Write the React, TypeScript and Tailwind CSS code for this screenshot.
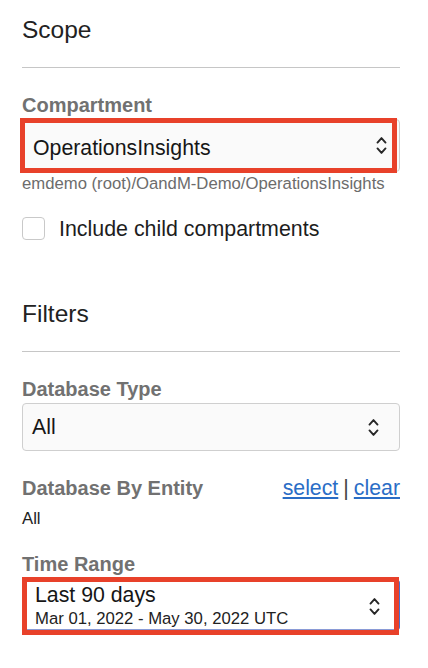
import React from "react";

const Chevrons = ({ className }: { className?: string }) => (
    <svg viewBox="0 0 10 18" className={className} fill="none" stroke="#262626" strokeWidth="1.8" strokeLinecap="round" strokeLinejoin="round">
        <path d="M1.2 6.2 L5 2 L8.8 6.2" />
        <path d="M1.2 11.8 L5 16 L8.8 11.8" />
    </svg>
);

const App = () => {
    return (
        <div className="w-[428px] h-[668px] bg-white pl-[22px] pr-[28px] pt-[16px] font-['Liberation_Sans',Arial,sans-serif] text-[#1d1d1d]">
            {/* Scope */}
            <div className="text-[24.5px] leading-[28px] text-[#222]">Scope</div>
            <div className="mt-[23px] h-px bg-[#c6c6c6]"></div>

            <div className="mt-[25px] text-[20px] leading-[24px] font-bold text-[#717171]">Compartment</div>
            <div className="relative mt-[2px]">
                <div className="h-[53px] flex items-center justify-between pl-[10px] pr-[11px] pt-[4px] bg-[#fafafa] border border-[#cfcfcf] rounded-[4px]">
                    <span className="text-[21.3px] leading-[24px] text-[#161616]">OperationsInsights</span>
                    <Chevrons className="w-[13px] h-[19px] -mt-[4px]" />
                </div>
                {/* annotation */}
                <div className="absolute -left-[2px] -top-[1px] right-[3px] -bottom-[1px] border-[5px] border-[#e8412a]"></div>
            </div>
            <div className="mt-[2px] text-[16.7px] leading-[20px] text-[#6c6c6c]">emdemo (root)/OandM-Demo/OperationsInsights</div>

            <label className="mt-[23px] h-[23px] flex items-center gap-[14px]">
                <span className="w-[23px] h-[23px] rounded-[4px] border border-[#c9c9c9] bg-white"></span>
                <span className="text-[21.4px] leading-[24px] text-[#1d1d1d]">Include child compartments</span>
            </label>

            {/* Filters */}
            <div className="mt-[60px] text-[24.5px] leading-[28px] text-[#222]">Filters</div>
            <div className="mt-[23px] h-px bg-[#c6c6c6]"></div>

            <div className="mt-[25px] text-[20px] leading-[24px] font-bold text-[#717171]">Database Type</div>
            <div className="mt-[2px] h-[48px] flex items-center justify-between pl-[9px] pr-[20px] bg-[#fafafa] border border-[#cfcfcf] rounded-[4px]">
                <span className="text-[21.3px] leading-[24px] text-[#161616]">All</span>
                <Chevrons className="w-[11px] h-[19px]" />
            </div>

            <div className="mt-[25px] flex items-baseline justify-between">
                <span className="text-[20px] leading-[24px] font-bold text-[#717171]">Database By Entity</span>
                <span className="text-[21.3px] leading-[24px] text-[#444]">
                    <a href="#" className="text-[#2a6dc6] underline">select</a>
                    <span className="mx-[5px]">|</span>
                    <a href="#" className="text-[#2a6dc6] underline">clear</a>
                </span>
            </div>
            <div className="mt-[9px] text-[16.7px] leading-[20px] text-[#1d1d1d]">All</div>

            <div className="mt-[23px] text-[20px] leading-[24px] font-bold text-[#717171]">Time Range</div>
            <div className="relative mt-[4px]">
                <div className="h-[50px] flex items-center justify-between pl-[12px] pr-[17px] bg-white border border-[#cfcfcf] border-r-[3px] border-r-[#4a6fd0] border-b-[#8a9bd6] rounded-[3px]">
                    <div className="flex flex-col self-start pt-[2px]">
                        <span className="text-[21.3px] leading-[24px] text-[#161616]">Last 90 days</span>
                        <span className="mt-[2px] text-[16.7px] leading-[20px] text-[#222]">Mar 01, 2022 - May 30, 2022 UTC</span>
                    </div>
                    <Chevrons className="w-[11px] h-[19px] mt-[2px]" />
                </div>
                {/* annotation */}
                <div className="absolute left-0 -top-[3px] right-[1px] -bottom-[5px] border-[5px] border-[#e8412a]"></div>
            </div>
        </div>
    );
};

export default App;
